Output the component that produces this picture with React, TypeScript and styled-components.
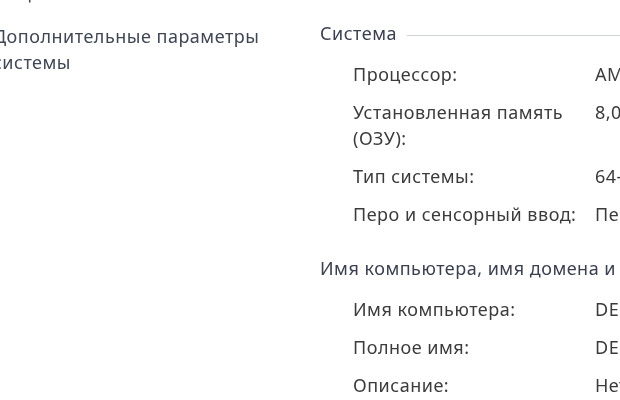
import React from 'react'
import styled, { createGlobalStyle } from 'styled-components'

const GlobalStyle = createGlobalStyle`
  html, body {
    margin: 0;
    padding: 0;
    background: #ffffff;
    overflow: hidden;
  }
  body {
    font-family: "Noto Sans", "Open Sans", "DejaVu Sans", sans-serif;
  }
`

const Window = styled.div`
  display: flex;
  width: 620px;
  height: 400px;
  overflow: hidden;
  background: #fff;
  font-size: 18px;
  line-height: 26px;
  letter-spacing: 0.5px;
  filter: blur(0.4px);
`

const Sidebar = styled.nav`
  width: 300px;
  flex-shrink: 0;
  margin-left: -7px;
  margin-top: -20px;
  display: flex;
  flex-direction: column;
  gap: 17px;
`

const SideLink = styled.a`
  display: block;
  width: 280px;
  color: #3f4654;
  text-decoration: none;
`

const Content = styled.main`
  flex: 1;
  padding: 20px 0 0 27px;
  min-width: 0;
`

const Section = styled.section`
  & + & {
    margin-top: 28px;
  }
`

const SectionTitle = styled.h2`
  display: flex;
  align-items: center;
  gap: 10px;
  margin: 0 0 15px;
  font-size: 18px;
  font-weight: normal;
  color: #3a4050;
  white-space: nowrap;

  &::after {
    content: '';
    flex: 1;
    height: 1px;
    margin-top: 4px;
    background: #cfd2d6;
  }
`

const Rows = styled.dl`
  display: grid;
  grid-template-columns: 242px auto;
  row-gap: 12px;
  margin: 0;
  padding-left: 33px;
`

const Label = styled.dt`
  width: 236px;
  color: #3b3b3b;
`

const Value = styled.dd`
  margin: 0;
  color: #3b3b3b;
  white-space: nowrap;
`

const systemRows = [
  { label: 'Процессор:', value: 'AMD Athlon(tm) II X2 250 Processor 3.00 GHz' },
  { label: 'Установленная память (ОЗУ):', value: '8,00 ГБ' },
  { label: 'Тип системы:', value: '64-разрядная операционная система' },
  { label: 'Перо и сенсорный ввод:', value: 'Перо и сенсорный ввод недоступны для этого экрана' },
]

const nameRows = [
  { label: 'Имя компьютера:', value: 'DESKTOP-PC' },
  { label: 'Полное имя:', value: 'DESKTOP-PC' },
  { label: 'Описание:', value: 'Нет' },
]

export default function App() {
  return (
    <>
      <GlobalStyle />
      <Window>
        <Sidebar>
          <SideLink href="#">Защита системы</SideLink>
          <SideLink href="#">Дополнительные параметры системы</SideLink>
        </Sidebar>
        <Content>
          <Section>
            <SectionTitle>Система</SectionTitle>
            <Rows>
              {systemRows.map((row) => (
                <React.Fragment key={row.label}>
                  <Label>{row.label}</Label>
                  <Value>{row.value}</Value>
                </React.Fragment>
              ))}
            </Rows>
          </Section>
          <Section>
            <SectionTitle>Имя компьютера, имя домена и параметры рабочей группы</SectionTitle>
            <Rows>
              {nameRows.map((row) => (
                <React.Fragment key={row.label}>
                  <Label>{row.label}</Label>
                  <Value>{row.value}</Value>
                </React.Fragment>
              ))}
            </Rows>
          </Section>
        </Content>
      </Window>
    </>
  )
}
